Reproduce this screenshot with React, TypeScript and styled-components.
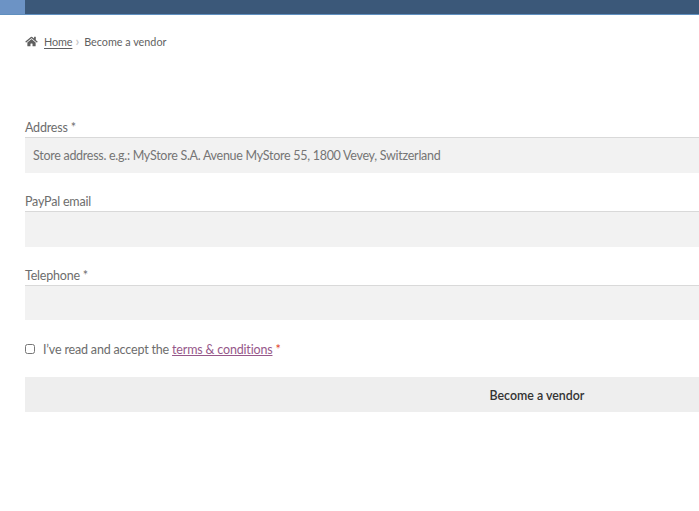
import React from "react";
import styled, { createGlobalStyle } from "styled-components";

const GlobalStyle = createGlobalStyle`
  html, body {
    margin: 0;
    padding: 0;
    background: #fff;
    overflow: hidden;
  }
  body {
    font-family: "Lato", "Liberation Sans", sans-serif;
    color: #6d6d6d;
  }
`;

const Page = styled.div`
  width: 699px;
  height: 511px;
  overflow: hidden;
`;

const Header = styled.header`
  display: flex;
  height: 14px;
  background: #3b5879;
  border-bottom: 1px solid #5f8fbf;
`;

const HeaderTab = styled.div`
  width: 25px;
  background: #6c93c5;
`;

const Content = styled.main`
  width: 1024px;
  padding: 0 0 0 25px;
`;

const Breadcrumb = styled.nav`
  display: flex;
  align-items: center;
  height: 14px;
  margin-top: 19px;
  font-size: 10.8px;
  color: #5f5f5f;
`;

const HomeLink = styled.a`
  margin-left: 6px;
  letter-spacing: -0.1px;
  color: #5f5f5f;
  text-decoration: underline;
  text-underline-offset: 2px;
`;

const Separator = styled.span`
  margin: 0 5px 0 3px;
  color: #c9c9c9;
  font-size: 13px;
  font-weight: 700;
`;

const Form = styled.form`
  display: flex;
  flex-direction: column;
  margin-top: 70px;
`;

const Field = styled.div`
  display: flex;
  flex-direction: column;
  margin-bottom: 19px;
`;

const Label = styled.label`
  height: 19px;
  line-height: 20px;
  font-size: 12.5px;
  letter-spacing: -0.2px;
  color: #6d6d6d;
`;

const Input = styled.input<{ $short?: boolean }>`
  box-sizing: border-box;
  width: 100%;
  height: ${(p) => (p.$short ? "35px" : "36px")};
  padding: 0 8px;
  border: none;
  border-top: 1px solid #d9d9d9;
  background: #f2f2f2;
  font-family: inherit;
  font-size: 12.5px;
  letter-spacing: -0.28px;
  outline: none;

  &::placeholder {
    color: #757575;
    opacity: 1;
  }
`;

const TermsRow = styled.div`
  display: flex;
  align-items: center;
  height: 18px;
  margin-top: 1px;
  font-size: 12.5px;
  letter-spacing: -0.17px;
  color: #6d6d6d;
`;

const Checkbox = styled.input`
  width: 10px;
  height: 10px;
  margin: 0 8px 0 0;
`;

const TermsLink = styled.a`
  margin-left: 3px;
  color: #96588a;
  text-decoration: underline;
`;

const Required = styled.span`
  margin-left: 3px;
  color: #e2401c;
`;

const SubmitButton = styled.button`
  width: 100%;
  height: 35px;
  margin-top: 19px;
  padding: 2px 0 0;
  border: none;
  background: #eeeeee;
  color: #333333;
  font-family: inherit;
  font-size: 12.4px;
  font-weight: 600;
`;

const HomeIcon = () => (
  <svg width="13" height="11" viewBox="0 0 576 512" fill="#5f5f5f">
    <path d="M280.37 148.26L96 300.11V464a16 16 0 0 0 16 16l112.06-.29a16 16 0 0 0 15.92-16V368a16 16 0 0 1 16-16h64a16 16 0 0 1 16 16v95.64a16 16 0 0 0 16 16.05L464 480a16 16 0 0 0 16-16V300L295.67 148.26a12.19 12.19 0 0 0-15.3 0zM571.6 251.47L488 182.56V44.05a12 12 0 0 0-12-12h-56a12 12 0 0 0-12 12v72.61L318.47 43a48 48 0 0 0-61 0L4.34 251.47a12 12 0 0 0-1.6 16.9l25.5 31A12 12 0 0 0 45.15 301l235.22-193.74a12.19 12.19 0 0 1 15.3 0L530.9 301a12 12 0 0 0 16.9-1.6l25.5-31a12 12 0 0 0-1.7-16.93z" />
  </svg>
);

const App: React.FC = () => {
  return (
    <Page>
      <GlobalStyle />
      <Header>
        <HeaderTab />
      </Header>
      <Content>
        <Breadcrumb>
          <HomeIcon />
          <HomeLink href="#">Home</HomeLink>
          <Separator>›</Separator>
          Become a vendor
        </Breadcrumb>
        <Form>
          <Field>
            <Label>Address *</Label>
            <Input placeholder="Store address. e.g.: MyStore S.A. Avenue MyStore 55, 1800 Vevey, Switzerland" />
          </Field>
          <Field>
            <Label>PayPal email</Label>
            <Input />
          </Field>
          <Field>
            <Label>Telephone *</Label>
            <Input $short />
          </Field>
          <TermsRow>
            <Checkbox type="checkbox" />
            I’ve read and accept the
            <TermsLink href="#">terms &amp; conditions</TermsLink>
            <Required>*</Required>
          </TermsRow>
          <SubmitButton type="button">Become a vendor</SubmitButton>
        </Form>
      </Content>
    </Page>
  );
};

export default App;
